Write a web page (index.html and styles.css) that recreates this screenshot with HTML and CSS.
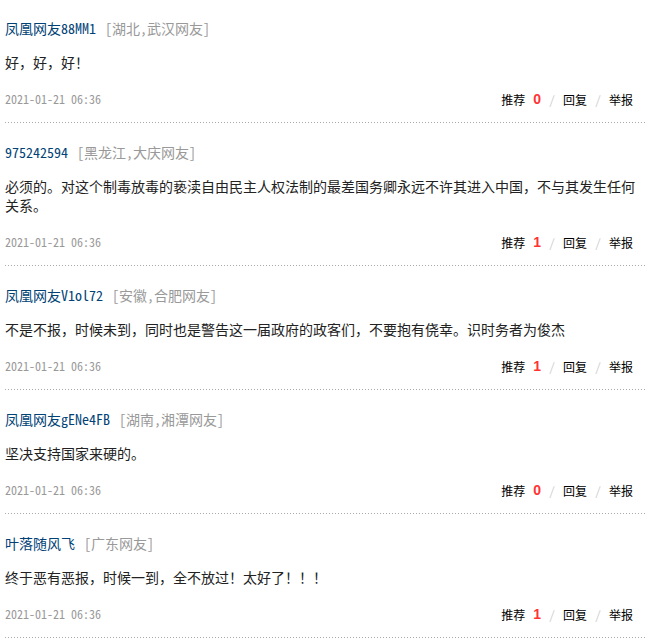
FILE: index.html
```html
<!DOCTYPE html>
<html lang="zh-CN">
<head>
    <meta charset="UTF-8">
    <title>网友评论</title>
    <link rel="stylesheet" href="styles.css">
</head>
<body>

    <div class="comment-list">
        <!-- 评论 1 -->
        <div class="comment">
            <div class="comment-head">
                <a class="user-name" href="#">凤凰网友88MM1</a>
                <span class="user-area">[湖北,武汉网友]</span>
            </div>
            <p class="comment-text">好，好，好！</p>
            <div class="comment-foot">
                <span class="comment-time">2021-01-21 06:36</span>
                <div class="comment-actions">
                    <a href="#">推荐</a>
                    <span class="vote-num">0</span>
                    <span class="sep">/</span>
                    <a href="#">回复</a>
                    <span class="sep">/</span>
                    <a href="#">举报</a>
                </div>
            </div>
        </div>

        <!-- 评论 2 -->
        <div class="comment">
            <div class="comment-head">
                <a class="user-name" href="#">975242594</a>
                <span class="user-area">[黑龙江,大庆网友]</span>
            </div>
            <p class="comment-text">必须的。对这个制毒放毒的亵渎自由民主人权法制的最差国务卿永远不许其进入中国，不与其发生任何关系。</p>
            <div class="comment-foot">
                <span class="comment-time">2021-01-21 06:36</span>
                <div class="comment-actions">
                    <a href="#">推荐</a>
                    <span class="vote-num">1</span>
                    <span class="sep">/</span>
                    <a href="#">回复</a>
                    <span class="sep">/</span>
                    <a href="#">举报</a>
                </div>
            </div>
        </div>

        <!-- 评论 3 -->
        <div class="comment">
            <div class="comment-head">
                <a class="user-name" href="#">凤凰网友V1ol72</a>
                <span class="user-area">[安徽,合肥网友]</span>
            </div>
            <p class="comment-text">不是不报，时候未到，同时也是警告这一届政府的政客们，不要抱有侥幸。识时务者为俊杰</p>
            <div class="comment-foot">
                <span class="comment-time">2021-01-21 06:36</span>
                <div class="comment-actions">
                    <a href="#">推荐</a>
                    <span class="vote-num">1</span>
                    <span class="sep">/</span>
                    <a href="#">回复</a>
                    <span class="sep">/</span>
                    <a href="#">举报</a>
                </div>
            </div>
        </div>

        <!-- 评论 4 -->
        <div class="comment">
            <div class="comment-head">
                <a class="user-name" href="#">凤凰网友gENe4FB</a>
                <span class="user-area">[湖南,湘潭网友]</span>
            </div>
            <p class="comment-text">坚决支持国家来硬的。</p>
            <div class="comment-foot">
                <span class="comment-time">2021-01-21 06:36</span>
                <div class="comment-actions">
                    <a href="#">推荐</a>
                    <span class="vote-num">0</span>
                    <span class="sep">/</span>
                    <a href="#">回复</a>
                    <span class="sep">/</span>
                    <a href="#">举报</a>
                </div>
            </div>
        </div>

        <!-- 评论 5 -->
        <div class="comment">
            <div class="comment-head">
                <a class="user-name" href="#">叶落随风飞</a>
                <span class="user-area">[广东网友]</span>
            </div>
            <p class="comment-text">终于恶有恶报，时候一到，全不放过！太好了！！！</p>
            <div class="comment-foot">
                <span class="comment-time">2021-01-21 06:36</span>
                <div class="comment-actions">
                    <a href="#">推荐</a>
                    <span class="vote-num">1</span>
                    <span class="sep">/</span>
                    <a href="#">回复</a>
                    <span class="sep">/</span>
                    <a href="#">举报</a>
                </div>
            </div>
        </div>
    </div>

</body>
</html>
```

FILE: styles.css
```css
/* Basic page */
body {
    margin: 0;
    background: #fff;
    font-family: "Noto Sans Mono CJK SC", "Noto Sans CJK SC", "Liberation Sans", sans-serif;
    color: #222;
}

a {
    text-decoration: none;
}

.comment-list {
    width: 640px;
    margin-left: 5px;
}

/* one comment, dotted rule drawn in the last pixel of the bottom padding */
.comment {
    padding: 19px 0 15px;
    background-image: repeating-linear-gradient(to right, #aaa 0, #aaa 1px, transparent 1px, transparent 3px);
    background-size: 100% 1px;
    background-repeat: no-repeat;
    background-position: left bottom;
}

.comment:first-child {
    padding-top: 18px;
}

.comment-head {
    height: 20px;
    line-height: 20px;
    font-size: 14px;
}

.user-name {
    color: #004276;
}

.user-area {
    color: #999;
    margin-left: 2px;
}

.comment-text {
    margin: 15px 0 0;
    font-size: 14px;
    line-height: 19px;
    color: #222;
}

.comment-foot {
    display: flex;
    justify-content: space-between;
    align-items: center;
    height: 20px;
    margin-top: 16px;
}

.comment-time {
    font-size: 12px;
    color: #999;
}

.comment-actions {
    display: flex;
    align-items: center;
    gap: 8px;
    padding-right: 12px;
    font-size: 12px;
    margin-top: 2px;
}

.comment-actions a {
    color: #000;
}

.vote-num {
    font-family: "Liberation Sans", Arial, sans-serif;
    font-size: 14px;
    font-weight: bold;
    color: #f33;
}

.sep {
    color: #ccc;
}
```
